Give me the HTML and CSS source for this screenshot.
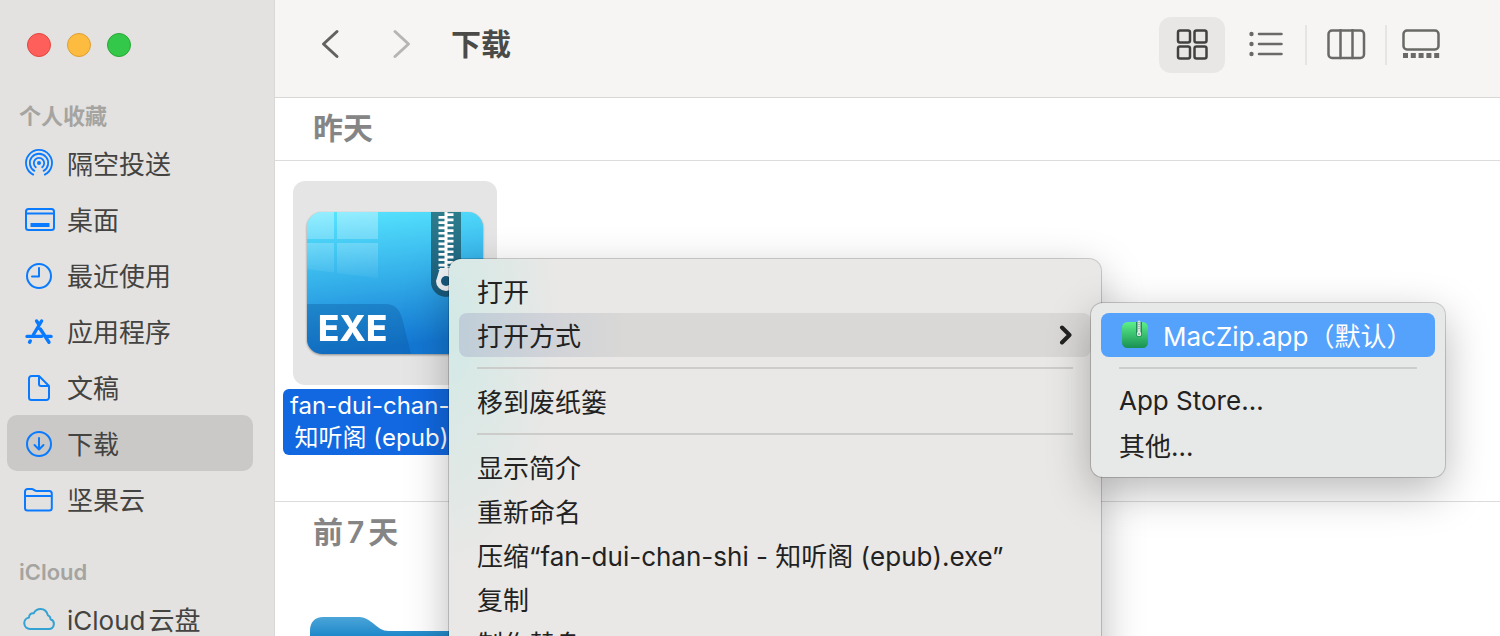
FILE: index.html
```html
<!DOCTYPE html>
<html lang="zh-CN">
<head>
  <meta charset="UTF-8">
  <meta name="viewport" content="width=device-width, initial-scale=1.0">
  <title>下载</title>
  <link rel="stylesheet" href="styles.css">
</head>
<body>
  <aside class="sidebar">
    <div class="lights">
      <button class="light red" type="button" aria-label="关闭"></button>
      <button class="light yellow" type="button" aria-label="最小化"></button>
      <button class="light green" type="button" aria-label="缩放"></button>
    </div>

    <h2 class="group-title">个人收藏</h2>
    <nav class="group">
      <a class="place" href="#airdrop">
        <svg class="place-icon" viewBox="0 0 32 32">
          <circle cx="16" cy="16" r="2" fill="currentColor" stroke="none"/>
          <path d="M12.8 20.2a5.2 5.2 0 1 1 6.4 0M11.4 23.9a9.2 9.2 0 1 1 9.2 0M10.2 27.6a13 13 0 1 1 11.6 0" stroke-width="1.8"/>
        </svg>
        <span class="label">隔空投送</span>
      </a>
      <a class="place" href="#desktop">
        <svg class="place-icon" viewBox="0 0 32 32">
          <rect x="3" y="6" width="28" height="21" rx="2.5"/>
          <path d="M3 10.500h28"/>
          <rect x="7.500" y="20" width="19" height="4" rx=".6" fill="currentColor" stroke="none"/>
        </svg>
        <span class="label">桌面</span>
      </a>
      <a class="place" href="#recents">
        <svg class="place-icon" viewBox="0 0 32 32">
          <circle cx="16" cy="17" r="12"/>
          <path d="M16 9v8.500H9"/>
        </svg>
        <span class="label">最近使用</span>
      </a>
      <a class="place" href="#applications">
        <svg class="place-icon" viewBox="0 0 32 32">
          <path d="M13.600 6l2 3M18.600 6L10.500 19.500M4 21.400h14.500M17.300 14L26 27.300M23.500 21.400h4.600M7.300 26l-.8 1.200" stroke-width="3.400"/>
        </svg>
        <span class="label">应用程序</span>
      </a>
      <a class="place" href="#documents">
        <svg class="place-icon" viewBox="0 0 32 32">
          <path d="M16 5H8.500A2.500 2.500 0 0 0 6 7.500v19A2.500 2.500 0 0 0 8.500 29h15a2.500 2.500 0 0 0 2.500-2.500V15L16 5v8a2 2 0 0 0 2 2h8"/>
        </svg>
        <span class="label">文稿</span>
      </a>
      <a class="place selected" href="#downloads">
        <svg class="place-icon" viewBox="0 0 32 32">
          <circle cx="16" cy="17" r="12"/>
          <path d="M16 11v11.500M11.500 18l4.500 4.500 4.500-4.500"/>
        </svg>
        <span class="label">下载</span>
      </a>
      <a class="place" href="#nutstore">
        <svg class="place-icon" viewBox="0 0 32 32">
          <path d="M2 25V8.500A2.500 2.500 0 0 1 4.500 6h4c2.500 0 3 2 5 2h12.800A2.500 2.500 0 0 1 28.800 10.500V25a2.500 2.500 0 0 1-2.500 2.500H4.500A2.500 2.500 0 0 1 2 25zM2 13h26.800"/>
        </svg>
        <span class="label">坚果云</span>
      </a>
    </nav>

    <h2 class="group-title">iCloud</h2>
    <nav class="group">
      <a class="place" href="#icloud">
        <svg class="place-icon cloud" viewBox="0 0 32 32">
          <path d="M7 26h18.500a5 5 0 0 0 2-9.700c.1-1.800-.8-3.300-2.600-3.900C24 8.500 21.500 6 17.500 6c-3 0-5.500 1.700-6.800 4.300-2.800-.4-4.700 1.500-4.700 4.200A5.800 5.800 0 0 0 7 26z"/>
        </svg>
        <span class="label">iCloud<span class="han">云盘</span></span>
      </a>
    </nav>
  </aside>

  <main class="window">
    <header class="toolbar">
      <button class="nav-btn" type="button" aria-label="后退">
        <svg width="20" height="32" viewBox="0 1 20 32"><path d="M17 3.500L3.500 16 17 28.500"/></svg>
      </button>
      <button class="nav-btn" type="button" aria-label="前进" disabled>
        <svg width="20" height="32" viewBox="0 1 20 32"><path d="M3 3.500L16.500 16 3 28.500"/></svg>
      </button>
      <h1 class="title">下载</h1>

      <div class="views">
        <button class="view active" type="button" aria-label="图标">
          <svg width="32" height="32" viewBox="0 1 32 32">
            <rect x="2" y="2.500" width="12" height="12" rx="2"/>
            <rect x="18.500" y="2.500" width="12" height="12" rx="2"/>
            <rect x="2" y="18.500" width="12" height="12" rx="2"/>
            <rect x="18.500" y="18.500" width="12" height="12" rx="2"/>
          </svg>
        </button>
        <button class="view" type="button" aria-label="列表">
          <svg width="36" height="32" viewBox="0 1 36 32">
            <path d="M11 6h22.500M11 16h22.500M11 26h22.500"/>
            <g fill="currentColor" stroke="none">
              <circle cx="3.500" cy="6" r="2.200"/>
              <circle cx="3.500" cy="16" r="2.200"/>
              <circle cx="3.500" cy="26" r="2.200"/>
            </g>
          </svg>
        </button>
        <span class="divider"></span>
        <button class="view" type="button" aria-label="分栏">
          <svg width="40" height="32" viewBox="0 1 40 32">
            <rect x="2.500" y="2.500" width="35.500" height="27.500" rx="3.500"/>
            <path d="M14.500 2v28M26.500 2v28"/>
          </svg>
        </button>
        <span class="divider"></span>
        <button class="view last" type="button" aria-label="画廊">
          <svg width="40" height="32" viewBox="0 1 40 32">
            <rect x="2.500" y="2.500" width="35" height="19" rx="3.500"/>
            <path d="M2 27.500h37" stroke-width="5" stroke-dasharray="5 2.800" stroke-linecap="butt"/>
          </svg>
        </button>
      </div>
    </header>

    <section class="files">
      <h2 class="day">昨天</h2>
      <div class="grid">
        <figure class="file">
          <div class="thumb">
            <svg class="exe" width="176" height="142" viewBox="0 0 176 142">
              <defs>
                <linearGradient id="exe-bg" x1="0" y1="0" x2=".15" y2="1">
                  <stop offset="0" stop-color="#58e6ff"/>
                  <stop offset=".5" stop-color="#35b1ea"/>
                  <stop offset="1" stop-color="#1377d3"/>
                </linearGradient>
                <linearGradient id="pane" x1="0" y1="0" x2="0" y2="1">
                  <stop offset="0" stop-color="#fff" stop-opacity=".36"/>
                  <stop offset="1" stop-color="#fff" stop-opacity=".04"/>
                </linearGradient>
                <linearGradient id="track" x1="0" y1="0" x2="0" y2="1">
                  <stop offset="0" stop-color="#2d7d8c"/>
                  <stop offset="1" stop-color="#185a7d"/>
                </linearGradient>
                <clipPath id="exe-clip"><rect width="176" height="142" rx="15"/></clipPath>
              </defs>
              <g clip-path="url(#exe-clip)">
                <rect width="176" height="142" fill="url(#exe-bg)"/>
                <path d="M0 0h27v27H0zM30 0h41v27H30zM0 31h27v29.500L0 57zM30 31h41v35l-41-5z" fill="url(#pane)"/>
                <path d="M0 92h78c10 0 14 5 17 14l9 36H0z" fill="#0b5a9d" fill-opacity=".36"/>
                <path d="M124 0h30v70a15 15 0 0 1-30 0z" fill="url(#track)"/>
                <g stroke="#fff" stroke-linecap="butt">
                  <path d="M139 0v58" stroke-width="3"/>
                  <path d="M135 4v54" stroke-width="7" stroke-dasharray="2.700 2.600"/>
                  <path d="M143 1.300v54" stroke-width="7" stroke-dasharray="2.700 2.600"/>
                </g>
                <path d="M133 56h12l4 13a10 10 0 1 1-20 0z" fill="#f3f6f8"/>
                <circle cx="139" cy="69" r="5" fill="#185a7d"/>
              </g>
              <text class="exe-text" x="11" y="129">EXE</text>
            </svg>
          </div>
          <figcaption class="name">fan-dui-chan-shi -<br>知听阁 (epub).exe</figcaption>
        </figure>
      </div>
    </section>

    <section class="files">
      <h2 class="day">前<span class="num">7</span>天</h2>
      <div class="grid">
        <figure class="file">
          <div class="thumb folder">
            <svg width="176" height="142" viewBox="0 0 176 142">
              <defs>
                <linearGradient id="folder-tab" x1="0" y1="0" x2="0" y2="1">
                  <stop offset="0" stop-color="#4ba5d8"/>
                  <stop offset=".15" stop-color="#1b86c9"/>
                  <stop offset="1" stop-color="#1b86c9"/>
                </linearGradient>
              </defs>
              <path d="M3 16C3 7 8 2 16 2h36c7 0 11 4 15 7 5 4 8 7 15 7h78q13 0 13 13v97q0 14-14 14H17q-14 0-14-14z" fill="url(#folder-tab)"/>
            </svg>
          </div>
        </figure>
      </div>
    </section>
  </main>

  <div class="menu context" role="menu">
    <button class="item" type="button" role="menuitem">打开</button>
    <button class="item open" type="button" role="menuitem" aria-haspopup="true">
      打开方式
      <svg class="arrow" width="14" height="22" viewBox="0 -1 14 22"><path d="M3 3.500L10.500 11 3 18.500"/></svg>
    </button>
    <hr class="line">
    <button class="item" type="button" role="menuitem">移到废纸篓</button>
    <hr class="line">
    <button class="item" type="button" role="menuitem">显示简介</button>
    <button class="item" type="button" role="menuitem">重新命名</button>
    <button class="item" type="button" role="menuitem">压缩“fan-dui-chan-shi - 知听阁 (epub).exe”</button>
    <button class="item" type="button" role="menuitem">复制</button>
    <button class="item" type="button" role="menuitem">制作替身</button>
  </div>

  <div class="menu submenu" role="menu">
    <button class="item current" type="button" role="menuitem">
      <svg width="32" height="32" viewBox="0 -1 32 32">
        <defs>
          <linearGradient id="zip-bg" x1="0" y1="0" x2="0" y2="1">
            <stop offset="0" stop-color="#5cf08b"/>
            <stop offset="1" stop-color="#189052"/>
          </linearGradient>
        </defs>
        <rect x="3" y="3" width="26" height="26" rx="5.500" fill="url(#zip-bg)"/>
        <path d="M17 3h6v12a3 3 0 0 1-6 0z" fill="#218a58"/>
        <path d="M20 3v11" stroke="#d9e5dc" stroke-width="3"/>
        <path d="M20 3v8" stroke="#7a9686" stroke-width="1" stroke-dasharray="1 1" stroke-linecap="butt"/>
        <circle cx="20" cy="15" r="1.500" fill="#218a58" stroke="#e5ece7" stroke-width="1.500"/>
      </svg>
      MacZip.app（默认）
    </button>
    <hr class="line">
    <button class="item" type="button" role="menuitem">App Store…</button>
    <button class="item" type="button" role="menuitem">其他…</button>
  </div>
</body>
</html>
```
FILE: styles.css
```css
* {
  box-sizing: border-box;
}

body {
  display: flex;
  height: 100vh;
  margin: 0;
  overflow: hidden;
  position: relative;
  background: #fff;
  color: #434341;
  font-family: Inter, "Noto Sans CJK SC", sans-serif;
  font-size: 26px;
}

h1, h2, figure {
  margin: 0;
}

button {
  border: none;
  padding: 0;
  background: none;
  color: inherit;
  font: inherit;
}

svg {
  flex: none;
  fill: none;
  stroke-linecap: round;
  stroke-linejoin: round;
}

/* Sidebar */
.sidebar {
  flex: none;
  width: 275px;
  height: 100%;
  overflow: hidden;
  background: #e3e2e0;
  border-right: 1px solid #d9d8d6;
}

.lights {
  display: flex;
  gap: 16px;
  padding: 33px 27px 14px;
}

.light {
  width: 24px;
  height: 24px;
  border: 1px solid;
  border-radius: 50%;
}

.red {
  background: #ff5f5b;
  border-color: #e2453f;
}

.yellow {
  background: #fdbc40;
  border-color: #dd9f33;
}

.green {
  background: #34c84a;
  border-color: #27a836;
}

.group-title {
  margin-top: 26px;
  padding-left: 19px;
  height: 38px;
  line-height: 38px;
  font-size: 22px;
  font-weight: 600;
  color: #a5a4a1;
}

.group {
  padding: 0 21px 0 7px;
}

.place {
  display: flex;
  align-items: center;
  gap: 12px;
  height: 56px;
  padding-left: 16px;
  border-radius: 10px;
  color: inherit;
  text-decoration: none;
  white-space: nowrap;
}

.place.selected {
  background: #cac9c7;
}

.place-icon {
  width: 32px;
  height: 32px;
  color: #0a7aff;
  stroke: currentColor;
  stroke-width: 2;
}

.place-icon.cloud {
  color: #35a2d4;
}

.label {
  padding-bottom: 2px;
}

.han {
  margin-left: 3px;
}

/* Toolbar */
.window {
  flex: 1;
  min-width: 0;
}

.toolbar {
  display: flex;
  align-items: center;
  height: 98px;
  padding: 0 45px 8px 25px;
  background: #f6f5f3;
  border-bottom: 1px solid #d9d8d7;
}

.nav-btn {
  display: flex;
  align-items: center;
  justify-content: center;
  width: 60px;
  height: 56px;
  margin-right: 12px;
}

.nav-btn svg {
  stroke: #62615f;
  stroke-width: 3;
}

.nav-btn:disabled svg {
  stroke: #b6b5b3;
}

.title {
  margin-left: 7px;
  padding-bottom: 2px;
  font-size: 30px;
  line-height: 40px;
  font-weight: 700;
  color: #4a4a48;
}

.views {
  display: flex;
  align-items: center;
  margin-left: auto;
}

.view {
  display: flex;
  align-items: center;
  justify-content: center;
  width: 78px;
  height: 56px;
  border-radius: 12px;
  color: #6a6967;
}

.view svg {
  stroke: currentColor;
  stroke-width: 2.5;
}

.view.active {
  width: 66px;
  margin-right: 2px;
  background: #e8e7e5;
  color: #41413f;
}

.view.last {
  width: 68px;
}

.divider {
  width: 2px;
  height: 40px;
  background: #e6e5e3;
}

/* Files */
.day {
  height: 62px;
  padding-left: 38px;
  line-height: 60px;
  font-size: 30px;
  font-weight: 600;
  color: #858585;
}

.num {
  margin: 0 4px;
}

.grid {
  display: flex;
  height: 342px;
  padding: 20px 8px;
  border-top: 1px solid #dcdcdc;
  border-bottom: 1px solid #dcdcdc;
}

.files + .files .grid {
  border: none;
}

.file {
  display: flex;
  flex-direction: column;
  align-items: center;
  width: 224px;
}

.thumb {
  display: flex;
  align-items: center;
  justify-content: center;
  flex: none;
  width: 204px;
  height: 204px;
  border-radius: 12px;
  background: #e5e5e5;
}

.thumb.folder {
  background: none;
}

.exe {
  filter: drop-shadow(0 1px 1px rgba(0, 0, 0, 0.4));
}

.exe-text {
  fill: #fff;
  font-family: Inter, sans-serif;
  font-size: 35px;
  font-weight: 800;
}

.name {
  margin-top: 4px;
  padding: 1px 7px;
  border-radius: 6px;
  background: #1168e0;
  color: #fff;
  font-size: 24px;
  line-height: 32px;
  text-align: center;
  white-space: nowrap;
}

/* Menus */
.menu {
  position: absolute;
  padding: 10px;
  border-radius: 12px;
  color: #222;
  box-shadow: 0 0 0 1px rgba(0, 0, 0, 0.18), 0 14px 44px rgba(0, 0, 0, 0.28);
}

.context {
  left: 449px;
  top: 259px;
  width: 652px;
  background: #e9e8e6 radial-gradient(ellipse 110px 240px at 0 70px, #d2e9e6, #e9e8e6) no-repeat;
}

.submenu {
  left: 1091px;
  top: 303px;
  width: 354px;
  background: #e7e9e8;
}

.item {
  display: flex;
  align-items: center;
  width: 100%;
  height: 44px;
  padding: 0 18px 2px;
  border-radius: 8px;
  text-align: left;
  white-space: nowrap;
}

.item.open {
  background: linear-gradient(90deg, #bfced9, #cfd2d8 80px, #d9d8d6 170px);
}

.item.current {
  gap: 12px;
  background: #54a2fc;
  color: #fff;
}

.arrow {
  margin-left: auto;
  stroke: #222;
  stroke-width: 4;
}

.line {
  height: 2px;
  margin: 10px 18px;
  border: none;
  background: #cccccb;
}
```
